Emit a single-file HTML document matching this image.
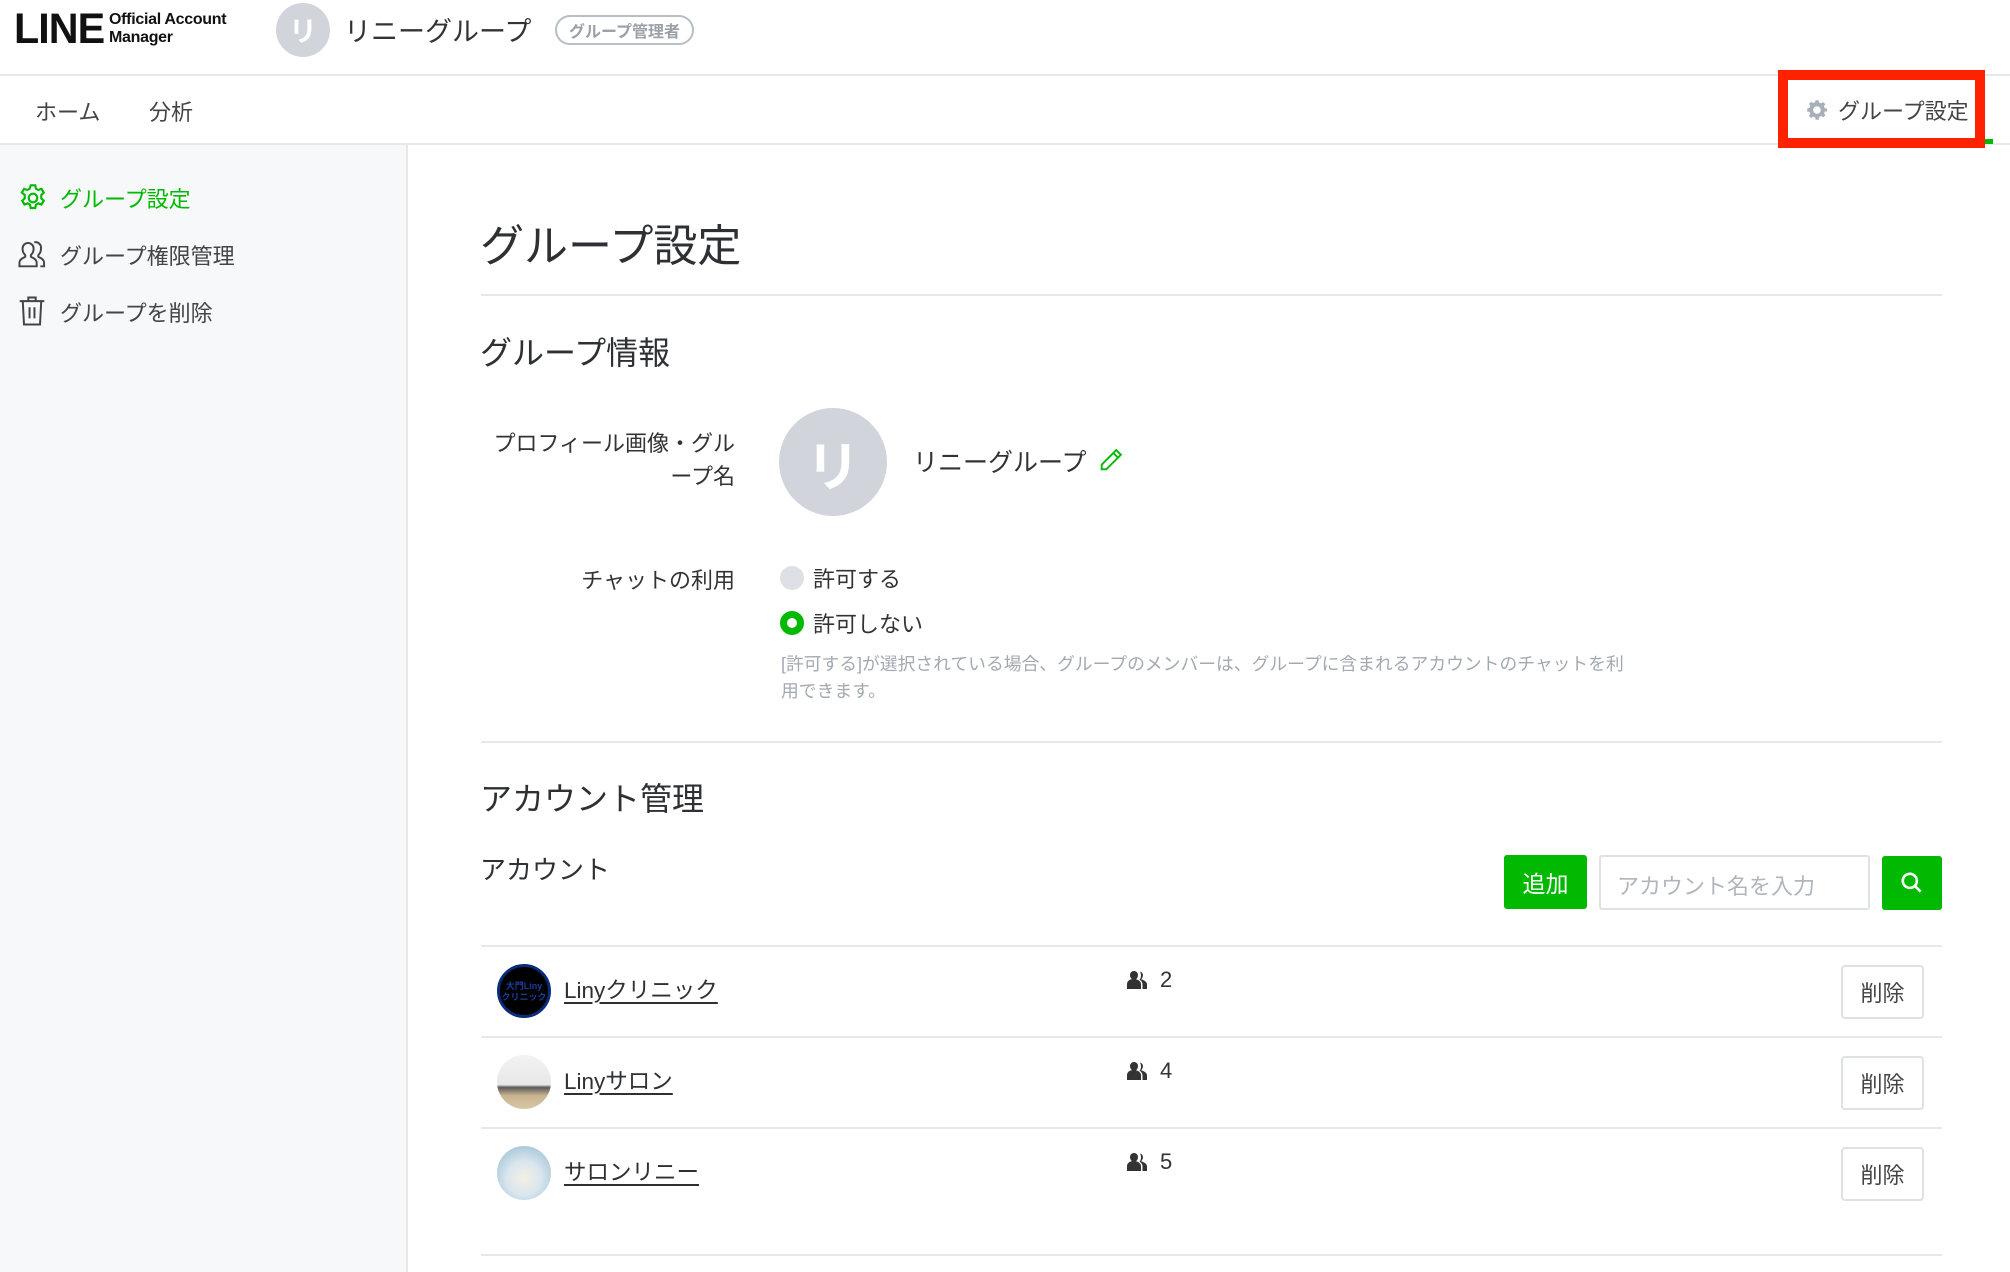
<!DOCTYPE html>
<html><head><meta charset="utf-8">
<style>
*{box-sizing:border-box;margin:0;padding:0}
body{width:2010px;height:1272px;overflow:hidden;background:#fff;font-family:"Liberation Sans","Noto Sans CJK JP",sans-serif;color:#2e3033;position:relative}
.a{position:absolute;white-space:nowrap}
.hr{position:absolute;height:2px;background:#e6e9ec}
.btn{position:absolute;border:2px solid #dfe2e5;border-radius:4px;background:#fff;font-size:22px;color:#444;display:flex;align-items:center;justify-content:center}
.lnk{text-decoration:underline;text-underline-offset:4px;font-size:22.5px;color:#2e3033}
</style></head><body>
<!-- header -->
<div class="a" style="left:14px;top:5px;font-size:43px;font-weight:900;color:#111;transform:scaleX(0.96);transform-origin:left top;letter-spacing:-1px">LINE</div>
<div class="a" style="left:109px;top:11px;font-size:16px;font-weight:700;line-height:18px;color:#111;letter-spacing:-0.3px">Official Account<br>Manager</div>
<div class="a" style="left:276px;top:3px;width:54px;height:54px;border-radius:50%;background:#d1d5db;color:#fff;font-size:28px;font-weight:700;display:flex;align-items:center;justify-content:center">リ</div>
<div class="a" style="left:344px;top:10px;font-size:27px;color:#333">リニーグループ</div>
<div class="a" style="left:555px;top:15px;width:139px;height:30px;border:2px solid #b8bec6;border-radius:15px;font-size:16px;color:#9aa1a9;font-weight:700;display:flex;align-items:center;justify-content:center">グループ管理者</div>
<div class="hr" style="left:0;top:74px;width:2010px"></div>
<div class="a" style="left:35px;top:95px;font-size:22px;color:#444">ホーム</div>
<div class="a" style="left:149px;top:95px;font-size:22px;color:#444">分析</div>
<div class="hr" style="left:0;top:143px;width:2010px"></div>
<div class="a" style="left:1983px;top:139px;width:10px;height:5px;background:#00b900"></div>
<svg class="a" style="left:1804px;top:97px" width="26" height="26" viewBox="0 0 24 24"><path fill="#a7afb8" fill-rule="evenodd" d="M12 8.5a3.5 3.5 0 1 0 0 7 3.5 3.5 0 0 0 0-7zm9.4 5l-2.1-.4a7.6 7.6 0 0 1-.8 1.9l1.3 1.8-2 2-1.8-1.3c-.6.4-1.2.6-1.9.8L13.7 21h-3l-.4-2.1a7.6 7.6 0 0 1-1.9-.8l-1.8 1.3-2-2 1.3-1.8a7.6 7.6 0 0 1-.8-1.9L3 13.4v-2.9l2.1-.4c.2-.7.5-1.3.8-1.9L4.6 6.4l2-2 1.8 1.3c.6-.4 1.2-.6 1.9-.8L10.6 3h2.9l.4 2.1c.7.2 1.3.4 1.9.8l1.8-1.3 2 2-1.3 1.8c.4.6.6 1.2.8 1.9l2.1.4z"/></svg>
<div class="a" style="left:1838px;top:94px;font-size:22px;color:#444">グループ設定</div>
<div class="a" style="left:1778px;top:70px;width:207px;height:78px;border:10px solid #ff2200"></div>
<!-- sidebar -->
<div class="a" style="left:0;top:145px;width:408px;height:1127px;background:#f7f8f9;border-right:2px solid #e6e9ec"></div>
<svg class="a" style="left:17px;top:182px" width="32" height="32" viewBox="0 0 24 24" fill="none" stroke="#00b900" stroke-width="1.6"><circle cx="12" cy="12" r="3.2"/><path d="M10.3 2.5h3.4l.5 2.5 1.8 1 2.4-.9 1.7 2.9-1.9 1.7v2.6l1.9 1.7-1.7 2.9-2.4-.9-1.8 1-.5 2.5h-3.4l-.5-2.5-1.8-1-2.4.9-1.7-2.9 1.9-1.7v-2.6L3.6 8l1.7-2.9 2.4.9 1.8-1z"/></svg>
<div class="a" style="left:60px;top:182px;font-size:22px;color:#00b900">グループ設定</div>
<svg class="a" style="left:17px;top:239px" width="32" height="30" viewBox="0 0 26 24" fill="none" stroke="#444" stroke-width="1.6"><path d="M2 22v-3c0-2 2-3.5 4-4.3 1-.4 1-1.6.2-2.4C5 11 4.5 9.5 4.5 7.5a4.5 4.5 0 0 1 9 0c0 2-.5 3.5-1.7 4.8-.8.8-.8 2 .2 2.4 2 .8 4 2.3 4 4.3v3z"/><path d="M14 2.5a4.5 4.5 0 0 1 5.5 5c0 2-.5 3.5-1.7 4.8-.8.8-.8 2 .2 2.4 2 .8 4 2.3 4 4.3v3h-3"/></svg>
<div class="a" style="left:60px;top:239px;font-size:22px;color:#444">グループ権限管理</div>
<svg class="a" style="left:18px;top:295px" width="28" height="32" viewBox="0 0 22 26" fill="none" stroke="#444" stroke-width="1.6"><path d="M1 5h20M8 5V2h6v3M3.5 5l1 19h13l1-19M9 10v9M13 10v9"/></svg>
<div class="a" style="left:60px;top:296px;font-size:22px;color:#444">グループを削除</div>
<!-- main -->
<div class="a" style="left:480px;top:210px;font-size:44px;color:#2e3033">グループ設定</div>
<div class="hr" style="left:481px;top:294px;width:1461px"></div>
<div class="a" style="left:480px;top:328px;font-size:32px">グループ情報</div>
<div class="a" style="left:480px;top:427px;width:255px;text-align:right;font-size:22px;line-height:33px;white-space:normal;color:#333">プロフィール画像・グル<br>ープ名</div>
<div class="a" style="left:779px;top:408px;width:108px;height:108px;border-radius:50%;background:#d1d5db;color:#fff;font-size:54px;font-weight:700;display:flex;align-items:center;justify-content:center">リ</div>
<div class="a" style="left:913px;top:443px;font-size:25px;color:#333">リニーグループ</div>
<svg class="a" style="left:1097px;top:446px" width="28" height="28" viewBox="0 0 24 24" fill="none" stroke="#00b900" stroke-width="1.6"><path d="M16.5 3.5l4 4L8 20H4v-4z M14 6l4 4"/></svg>
<div class="a" style="left:480px;top:563px;width:255px;text-align:right;font-size:22px;color:#333">チャットの利用</div>
<div class="a" style="left:780px;top:566px;width:24px;height:24px;border-radius:50%;background:#dde0e4"></div>
<div class="a" style="left:813px;top:562px;font-size:22px;color:#333">許可する</div>
<div class="a" style="left:780px;top:611px;width:24px;height:24px;border-radius:50%;border:7px solid #00b900;background:#fff"></div>
<div class="a" style="left:813px;top:607px;font-size:22px;color:#333">許可しない</div>
<div class="a" style="left:781px;top:651px;font-size:17.8px;line-height:27px;color:#a3a9b0">[許可する]が選択されている場合、グループのメンバーは、グループに含まれるアカウントのチャットを利<br>用できます。</div>
<div class="hr" style="left:481px;top:741px;width:1461px"></div>
<div class="a" style="left:480px;top:774px;font-size:32px">アカウント管理</div>
<div class="a" style="left:480px;top:850px;font-size:26px">アカウント</div>
<div class="a" style="left:1504px;top:855px;width:83px;height:54px;background:#00b900;border-radius:3px;color:#fff;font-size:23px;display:flex;align-items:center;justify-content:center">追加</div>
<div class="a" style="left:1599px;top:855px;width:271px;height:55px;border:2px solid #dfe2e5;border-radius:3px;font-size:22px;color:#b0b6bd;padding:12px 0 0 16px">アカウント名を入力</div>
<div class="a" style="left:1882px;top:856px;width:60px;height:54px;background:#00b900;border-radius:3px;display:flex;align-items:center;justify-content:center"><svg width="26" height="26" viewBox="0 0 24 24" fill="none" stroke="#fff" stroke-width="2.4"><circle cx="10" cy="10" r="6.5"/><path d="M15 15l5 5"/></svg></div>
<div class="hr" style="left:481px;top:945px;width:1461px"></div>
<div class="hr" style="left:481px;top:1036px;width:1461px"></div>
<div class="hr" style="left:481px;top:1127px;width:1461px"></div>
<div class="hr" style="left:481px;top:1254px;width:1461px"></div>
<!-- rows -->
<div class="a" style="left:497px;top:964px;width:54px;height:54px;border-radius:50%;background:#000;border:3px solid #0a2a7a;color:#1a3d9e;font-size:9px;line-height:11px;text-align:center;padding-top:14px;font-weight:700">大門Liny<br>クリニック</div>
<div class="a lnk" style="left:564px;top:973px">Linyクリニック</div>
<div class="a" style="left:497px;top:1055px;width:54px;height:54px;border-radius:50%;background:linear-gradient(#f2f2f2 0,#e8e8e8 55%,#5a5a5a 60%,#c9b38f 75%,#d8c7a8 100%)"></div>
<div class="a lnk" style="left:564px;top:1064px">Linyサロン</div>
<div class="a" style="left:497px;top:1146px;width:54px;height:54px;border-radius:50%;background:radial-gradient(circle at 50% 60%,#f5efe4 0,#d9e6ee 40%,#a9c7d9 80%,#8fb0a0 100%)"></div>
<div class="a lnk" style="left:564px;top:1155px">サロンリニー</div>
<svg class="a" style="left:1127px;top:970px" width="22" height="20" viewBox="0 0 22 20" fill="#333"><path d="M7 1a4 4 0 0 1 4 4c0 2-1 3.5-2 4.3 3 .7 5 2.5 5 5V19H0v-4.7c0-2.8 2-4.6 5-5.2C4 8.5 3 7 3 5a4 4 0 0 1 4-4zM13 1.5a4 4 0 0 1 3 3.5c0 2-1 3.5-2 4.3 3 .7 6 2.5 6 5V19h-4.5v-4.8c0-2-1.3-3.6-3-4.5 1-1 1.5-2.5 1.5-4.2 0-1.5-.4-2.8-1-4z"/></svg>
<div class="a" style="left:1160px;top:967px;font-size:22px;color:#333">2</div>
<svg class="a" style="left:1127px;top:1061px" width="22" height="20" viewBox="0 0 22 20" fill="#333"><path d="M7 1a4 4 0 0 1 4 4c0 2-1 3.5-2 4.3 3 .7 5 2.5 5 5V19H0v-4.7c0-2.8 2-4.6 5-5.2C4 8.5 3 7 3 5a4 4 0 0 1 4-4zM13 1.5a4 4 0 0 1 3 3.5c0 2-1 3.5-2 4.3 3 .7 6 2.5 6 5V19h-4.5v-4.8c0-2-1.3-3.6-3-4.5 1-1 1.5-2.5 1.5-4.2 0-1.5-.4-2.8-1-4z"/></svg>
<div class="a" style="left:1160px;top:1058px;font-size:22px;color:#333">4</div>
<svg class="a" style="left:1127px;top:1152px" width="22" height="20" viewBox="0 0 22 20" fill="#333"><path d="M7 1a4 4 0 0 1 4 4c0 2-1 3.5-2 4.3 3 .7 5 2.5 5 5V19H0v-4.7c0-2.8 2-4.6 5-5.2C4 8.5 3 7 3 5a4 4 0 0 1 4-4zM13 1.5a4 4 0 0 1 3 3.5c0 2-1 3.5-2 4.3 3 .7 6 2.5 6 5V19h-4.5v-4.8c0-2-1.3-3.6-3-4.5 1-1 1.5-2.5 1.5-4.2 0-1.5-.4-2.8-1-4z"/></svg>
<div class="a" style="left:1160px;top:1149px;font-size:22px;color:#333">5</div>
<div class="btn" style="left:1841px;top:965px;width:83px;height:54px">削除</div>
<div class="btn" style="left:1841px;top:1056px;width:83px;height:54px">削除</div>
<div class="btn" style="left:1841px;top:1147px;width:83px;height:54px">削除</div>
</body></html>
